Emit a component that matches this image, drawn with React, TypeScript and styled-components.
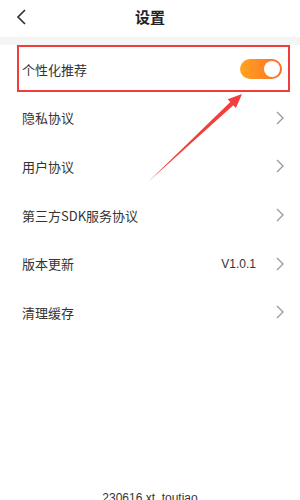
import React from "react";
import styled, { createGlobalStyle } from "styled-components";

const GlobalStyle = createGlobalStyle`
    html, body {
        margin: 0;
        padding: 0;
        background: #ffffff;
        overflow: hidden;
    }
    body {
        font-family: "Noto Sans CJK SC", "Noto Sans", sans-serif;
        color: #333333;
    }
`;

const Page = styled.div`
    position: relative;
    width: 300px;
    height: 500px;
    display: flex;
    flex-direction: column;
    background: #ffffff;
    overflow: hidden;

    & > * {
        flex-shrink: 0;
    }
`;

const Header = styled.div`
    height: 37px;
    display: flex;
    align-items: center;
    justify-content: center;
    position: relative;

    & > .back {
        position: absolute;
        left: 14px;
        top: 8px;
    }
`;

const Title = styled.div`
    font-size: 15px;
    font-weight: bold;
    color: #222222;
    line-height: 18px;
    margin-top: -3px;
`;

const Divider = styled.div`
    height: 8px;
    background: #f5f5f5;
`;

const List = styled.div`
    display: flex;
    flex-direction: column;
`;

const Row = styled.div`
    height: 48.6px;
    display: flex;
    align-items: center;
    padding: 0 16px 0 22px;

    & > .label {
        flex: 1;
        font-size: 13px;
        color: #333333;
    }

    & > .value {
        font-family: "Liberation Sans", "Noto Sans", sans-serif;
        font-size: 12px;
        color: #333333;
        margin-right: 20px;
    }
`;

const Toggle = styled.div<{ $on?: boolean }>`
    width: 42px;
    height: 20px;
    border-radius: 10px;
    margin-right: 2px;
    background: ${(p) => (p.$on ? "linear-gradient(90deg, #ffa51d, #ff6b2c)" : "#dddddd")};
    display: flex;
    align-items: center;
    justify-content: ${(p) => (p.$on ? "flex-end" : "flex-start")};
    padding: 0 2px;
    box-sizing: border-box;

    & > .knob {
        width: 16px;
        height: 16px;
        border-radius: 50%;
        background: #ffffff;
    }
`;

const Footer = styled.div`
    margin-top: 153px;
    text-align: center;
    font-family: "Liberation Sans", "Noto Sans", sans-serif;
    font-size: 12px;
    line-height: 16px;
    color: #333333;
`;

const Highlight = styled.div`
    position: absolute;
    left: 17px;
    top: 45px;
    width: 273px;
    height: 47px;
    border: 2px solid #f23b3b;
    box-sizing: border-box;
    pointer-events: none;
`;

const ArrowLayer = styled.svg`
    position: absolute;
    left: 0;
    top: 0;
    pointer-events: none;
`;

const BackIcon = () => (
    <svg className="back" width="14" height="20" viewBox="0 0 14 20">
        <polyline points="11,2 4,9 11,16" fill="none" stroke="#333333" strokeWidth="1.7" />
    </svg>
);

const Chevron = () => (
    <svg width="8" height="14" viewBox="0 0 8 14">
        <polyline points="1,1 7,7 1,13" fill="none" stroke="#9a9a9a" strokeWidth="1.3" />
    </svg>
);

interface Item {
    label: string;
    value?: string;
}

const items: Item[] = [
    { label: "隐私协议" },
    { label: "用户协议" },
    { label: "第三方SDK服务协议" },
    { label: "版本更新", value: "V1.0.1" },
    { label: "清理缓存" },
];

const App: React.FC = () => {
    return (
        <Page>
            <GlobalStyle />
            <Header>
                <BackIcon />
                <Title>设置</Title>
            </Header>
            <Divider />
            <List>
                <Row>
                    <div className="label">个性化推荐</div>
                    <Toggle $on>
                        <div className="knob" />
                    </Toggle>
                </Row>
                {items.map((item) => (
                    <Row key={item.label}>
                        <div className="label">{item.label}</div>
                        {item.value && <div className="value">{item.value}</div>}
                        <Chevron />
                    </Row>
                ))}
            </List>
            <Footer>230616.xt_toutiao</Footer>

            <Highlight />
            <ArrowLayer width="300" height="500" viewBox="0 0 300 500">
                <polygon
                    points="148,182 233.3,105.2 235.9,108 242,94 227.7,99.2 230.3,102"
                    fill="#f43d3d"
                />
            </ArrowLayer>
        </Page>
    );
};

export default App;
